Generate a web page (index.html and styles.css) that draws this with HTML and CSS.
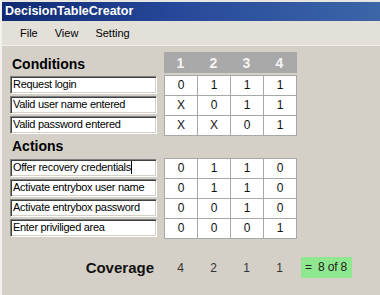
FILE: index.html
```html
<!DOCTYPE html>
<html lang="en">
<head>
    <meta charset="UTF-8">
    <title>DecisionTableCreator</title>
    <link rel="stylesheet" href="styles.css">
</head>
<body>
<div class="window">
    <div class="titlebar">DecisionTableCreator</div>
    <div class="menubar">
        <span>File</span>
        <span>View</span>
        <span>Setting</span>
    </div>

    <div class="content">
        <!-- conditions -->
        <div class="section">
            <div class="heading">Conditions</div>
            <div class="colhead">
                <span>1</span><span>2</span><span>3</span><span>4</span>
            </div>
            <div class="labels">
                <div class="box">Request login</div>
                <div class="box">Valid user name entered</div>
                <div class="box">Valid password entered</div>
            </div>
            <div class="cells">
                <span>0</span><span>1</span><span>1</span><span>1</span>
                <span>X</span><span>0</span><span>1</span><span>1</span>
                <span>X</span><span>X</span><span>0</span><span>1</span>
            </div>
        </div>

        <!-- actions -->
        <div class="section">
            <div class="heading actions-head">Actions</div>
            <div></div>
            <div class="labels">
                <div class="box">Offer recovery credentials<i class="caret"></i></div>
                <div class="box">Activate entrybox user name</div>
                <div class="box">Activate entrybox password</div>
                <div class="box">Enter priviliged area</div>
            </div>
            <div class="cells">
                <span>0</span><span>1</span><span>1</span><span>0</span>
                <span>0</span><span>1</span><span>1</span><span>0</span>
                <span>0</span><span>0</span><span>1</span><span>0</span>
                <span>0</span><span>0</span><span>0</span><span>1</span>
            </div>
        </div>

        <!-- coverage -->
        <div class="coverage">
            <div class="cov-title">Coverage</div>
            <span>4</span><span>2</span><span>1</span><span>1</span>
            <div class="total">=&nbsp; 8 of 8</div>
        </div>
    </div>
</div>
</body>
</html>
```

FILE: styles.css
```css
*{
    padding: 0;
    margin: 0;
    box-sizing: border-box;
}

html, body{
    background: #d4d0c8;
    font-family: "Liberation Sans", Arial, sans-serif;
    color: #000;
}

.window{
    width: 380px;
    height: 295px;
    border-left: 2px solid #f4f2ee;
    border-top: 2px solid #e8e6e1;
    overflow: hidden;
}

.titlebar{
    height: 19px;
    line-height: 19px;
    padding-left: 3px;
    color: #fff;
    font-size: 12.5px;
    font-weight: bold;
    letter-spacing: 0;
    background: linear-gradient(to right, #0e2a72, #26489a 45%, #3c66a8);
}

.menubar{
    height: 25px;
    line-height: 25px;
    padding-left: 18px;
    font-size: 11px;
    background: #e3e0d9;
    border-bottom: 1px solid #efede8;
    display: flex;
    gap: 17px;
}

.content{
    padding: 6px 0 0 8px;
}

.section{
    display: grid;
    grid-template-columns: 154px 133px;
}

.heading{
    font-size: 14px;
    font-weight: bold;
    padding-left: 2px;
    line-height: 21px;
    padding-top: 2px;
}

.actions-head{
    height: 22px;
    padding-top: 0;
    line-height: 20px;
}

.colhead{
    height: 21px;
    background: #a9a9a9;
    display: grid;
    grid-template-columns: repeat(4, 33px);
    color: #f4f4f4;
    font-size: 14px;
    font-weight: bold;
    text-align: center;
    line-height: 22px;
}

.labels{
    display: flex;
    flex-direction: column;
    gap: 2px;
    padding-top: 1px;
}

.box{
    width: 147px;
    height: 18px;
    line-height: 15px;
    padding-left: 2px;
    font-size: 11px;
    letter-spacing: -0.3px;
    white-space: nowrap;
    background: #fff;
    border-top: 1px solid #808080;
    border-left: 1px solid #808080;
    border-right: 1px solid #fff;
    border-bottom: 1px solid #fff;
    box-shadow: inset 1px 1px 0 #404040, inset -1px -1px 0 #d4d0c8;
}

.caret{
    display: inline-block;
    width: 1px;
    height: 13px;
    background: #000;
    vertical-align: -3px;
}

.cells{
    display: grid;
    grid-template-columns: repeat(4, 32px);
    grid-auto-rows: 19px;
    gap: 1px;
    border: 1px solid #a8a8a8;
    background: #a8a8a8;
    align-self: start;
}

.cells span{
    background: #fff;
    text-align: center;
    font-size: 12px;
    line-height: 19px;
    color: #111;
}

.coverage{
    display: grid;
    grid-template-columns: 154px repeat(4, 33px) auto;
    align-items: center;
    margin-top: 18px;
    height: 21px;
}

.cov-title{
    font-size: 15px;
    font-weight: bold;
    text-align: right;
    padding-right: 10px;
    color: #111;
}

.coverage span{
    text-align: center;
    font-size: 12px;
    color: #333;
}

.total{
    justify-self: start;
    margin-left: 5px;
    height: 21px;
    line-height: 21px;
    padding: 0 5px 0 4px;
    font-size: 12px;
    letter-spacing: -0.2px;
    white-space: nowrap;
    color: #222;
    background: #8fe78f;
}
```
